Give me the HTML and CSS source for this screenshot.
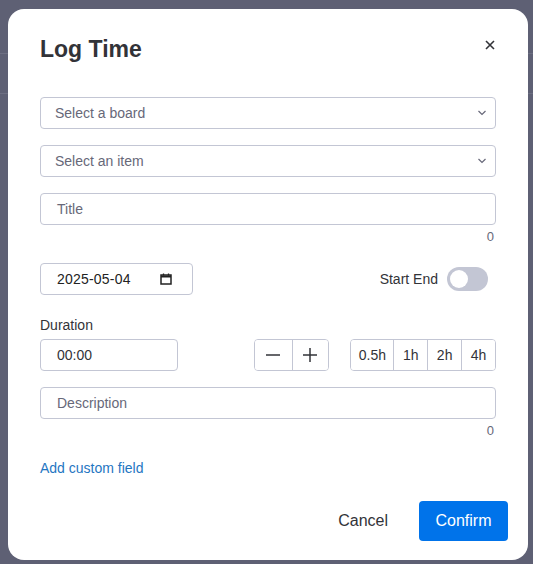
FILE: index.html
```html
<!DOCTYPE html>
<html>
<head>
  <title>Log Time</title>
  <link rel="stylesheet" href="styles.css">
</head>
<body>
  <div class="backdrop">
    <div class="bg-line line-1"></div>
    <div class="bg-line line-2"></div>
  </div>

  <div class="modal">
    <div class="modal-header">
      <h2>Log Time</h2>
      <button class="close-btn" aria-label="Close">
        <svg width="10" height="10" viewBox="0 0 10 10"><path d="M1 1L9 9M9 1L1 9" stroke="#323338" stroke-width="1.6"/></svg>
      </button>
    </div>

    <div class="field">
      <div class="select">
        <span>Select a board</span>
        <svg width="10" height="6" viewBox="0 0 10 6"><path d="M1.5 1l3.5 3.5L8.5 1" fill="none" stroke="#676879" stroke-width="1.2"/></svg>
      </div>
    </div>

    <div class="field">
      <div class="select">
        <span>Select an item</span>
        <svg width="10" height="6" viewBox="0 0 10 6"><path d="M1.5 1l3.5 3.5L8.5 1" fill="none" stroke="#676879" stroke-width="1.2"/></svg>
      </div>
    </div>

    <div class="field title-field">
      <div class="input">Title</div>
      <div class="counter">0</div>
    </div>

    <div class="row date-row">
      <div class="input date-input">
        <span>2025-05-04</span>
        <svg width="12" height="12" viewBox="0 0 12 12"><rect x="1" y="2" width="10" height="9" fill="none" stroke="#222" stroke-width="1.5"/><path d="M1 3.5h10" stroke="#222" stroke-width="2"/><path d="M3.5 0.5v2M8.5 0.5v2" stroke="#222" stroke-width="1.3"/></svg>
      </div>
      <div class="toggle-wrap">
        <span>Start End</span>
        <div class="toggle"><div class="knob"></div></div>
      </div>
    </div>

    <div class="label">Duration</div>
    <div class="row duration-row">
      <div class="input time-input">00:00</div>
      <div class="btn-group stepper">
        <button>
          <svg width="14" height="14" viewBox="0 0 14 14"><path d="M0 7h14" stroke="#323338" stroke-width="1.5"/></svg>
        </button>
        <button>
          <svg width="14" height="14" viewBox="0 0 14 14"><path d="M0 7h14M7 0v14" stroke="#323338" stroke-width="1.5"/></svg>
        </button>
      </div>
      <div class="btn-group presets">
        <button>0.5h</button>
        <button>1h</button>
        <button>2h</button>
        <button>4h</button>
      </div>
    </div>

    <div class="field desc-field">
      <div class="input">Description</div>
      <div class="counter">0</div>
    </div>

    <a class="add-link" href="#">Add custom field</a>

    <div class="modal-footer">
      <button class="cancel-btn">Cancel</button>
      <button class="confirm-btn">Confirm</button>
    </div>
  </div>
</body>
</html>
```

FILE: styles.css
```css
body {
  margin: 0;
  font-family: 'Liberation Sans', Arial, sans-serif;
  background: #5e6074;
  width: 533px;
  height: 564px;
  overflow: hidden;
  position: relative;
}

.backdrop {
  position: absolute;
  inset: 0;
}

.bg-line {
  position: absolute;
  left: 0;
  right: 0;
  height: 1px;
  background: #6d6f82;
}

.line-1 { top: 53px; }
.line-2 { top: 93px; }

.modal {
  position: absolute;
  left: 8px;
  top: 9px;
  width: 520px;
  height: 551px;
  box-sizing: border-box;
  background: #fff;
  border-radius: 16px;
  padding: 22px 32px 0 32px;
  color: #323338;
}

.modal-header {
  display: flex;
  justify-content: space-between;
  align-items: center;
  height: 34px;
  margin-bottom: 32px;
}

.modal-header h2 {
  margin: 0;
  font-size: 23px;
  font-weight: bold;
  color: #323338;
  position: relative;
  top: 1px;
}

.close-btn {
  background: none;
  border: none;
  padding: 0;
  width: 24px;
  height: 24px;
  margin-right: -6px;
  margin-top: -7px;
  display: flex;
  align-items: center;
  justify-content: center;
}

.field {
  margin-bottom: 16px;
}

.select,
.input {
  height: 32px;
  box-sizing: border-box;
  border: 1px solid #c3c6d4;
  border-radius: 4px;
  display: flex;
  align-items: center;
  font-size: 14px;
  color: #676879;
}

.select {
  justify-content: space-between;
  padding: 0 8px 0 14px;
}

.input {
  padding: 0 16px;
}

.counter {
  text-align: right;
  font-size: 13px;
  color: #676879;
  margin-top: 5px;
  padding-right: 2px;
  line-height: 13px;
}

.title-field {
  margin-bottom: 20px;
}

.row {
  display: flex;
  align-items: center;
}

.date-row {
  justify-content: space-between;
  margin-bottom: 22px;
}

.date-input {
  width: 153px;
  color: #222;
  justify-content: space-between;
  padding: 0 20px 0 16px;
  font-size: 14px;
  letter-spacing: 0.2px;
}

.toggle-wrap {
  display: flex;
  align-items: center;
  gap: 9px;
  margin-right: 8px;
  font-size: 14px;
  color: #323338;
}

.toggle {
  width: 41px;
  height: 24px;
  border-radius: 12px;
  background: #c3c6d4;
  position: relative;
}

.knob {
  position: absolute;
  left: 3px;
  top: 3px;
  width: 18px;
  height: 18px;
  border-radius: 50%;
  background: #fff;
}

.label {
  font-size: 14px;
  color: #323338;
  margin-bottom: 6px;
  line-height: 16px;
}

.duration-row {
  margin-bottom: 16px;
}

.time-input {
  width: 138px;
  color: #323338;
}

.btn-group {
  display: flex;
  border: 1px solid #c3c6d4;
  border-radius: 4px;
  height: 32px;
  box-sizing: border-box;
  overflow: hidden;
}

.btn-group button {
  background: #fff;
  border: none;
  border-left: 1px solid #c3c6d4;
  font-family: inherit;
  font-size: 14px;
  color: #323338;
  padding: 0;
  display: flex;
  align-items: center;
  justify-content: center;
}

.btn-group button:first-child {
  border-left: none;
}

.stepper {
  margin-left: 76px;
}

.stepper button {
  width: 37px;
}

.presets {
  margin-left: 21px;
}

.presets button {
  width: 34px;
}

.presets button:first-child {
  width: 42px;
}

.desc-field {
  margin-bottom: 0;
}

.add-link {
  display: inline-block;
  margin-top: 23px;
  font-size: 14px;
  color: #1f76c2;
  text-decoration: none;
}

.modal-footer {
  display: flex;
  justify-content: flex-end;
  align-items: center;
  margin-top: 24px;
  margin-right: -12px;
  gap: 15px;
}

.cancel-btn {
  background: none;
  border: none;
  font-family: inherit;
  font-size: 16px;
  color: #323338;
  padding: 0 16px;
  height: 40px;
}

.confirm-btn {
  background: #0073ea;
  border: none;
  border-radius: 4px;
  color: #fff;
  font-family: inherit;
  font-size: 16px;
  width: 89px;
  height: 40px;
}
```
